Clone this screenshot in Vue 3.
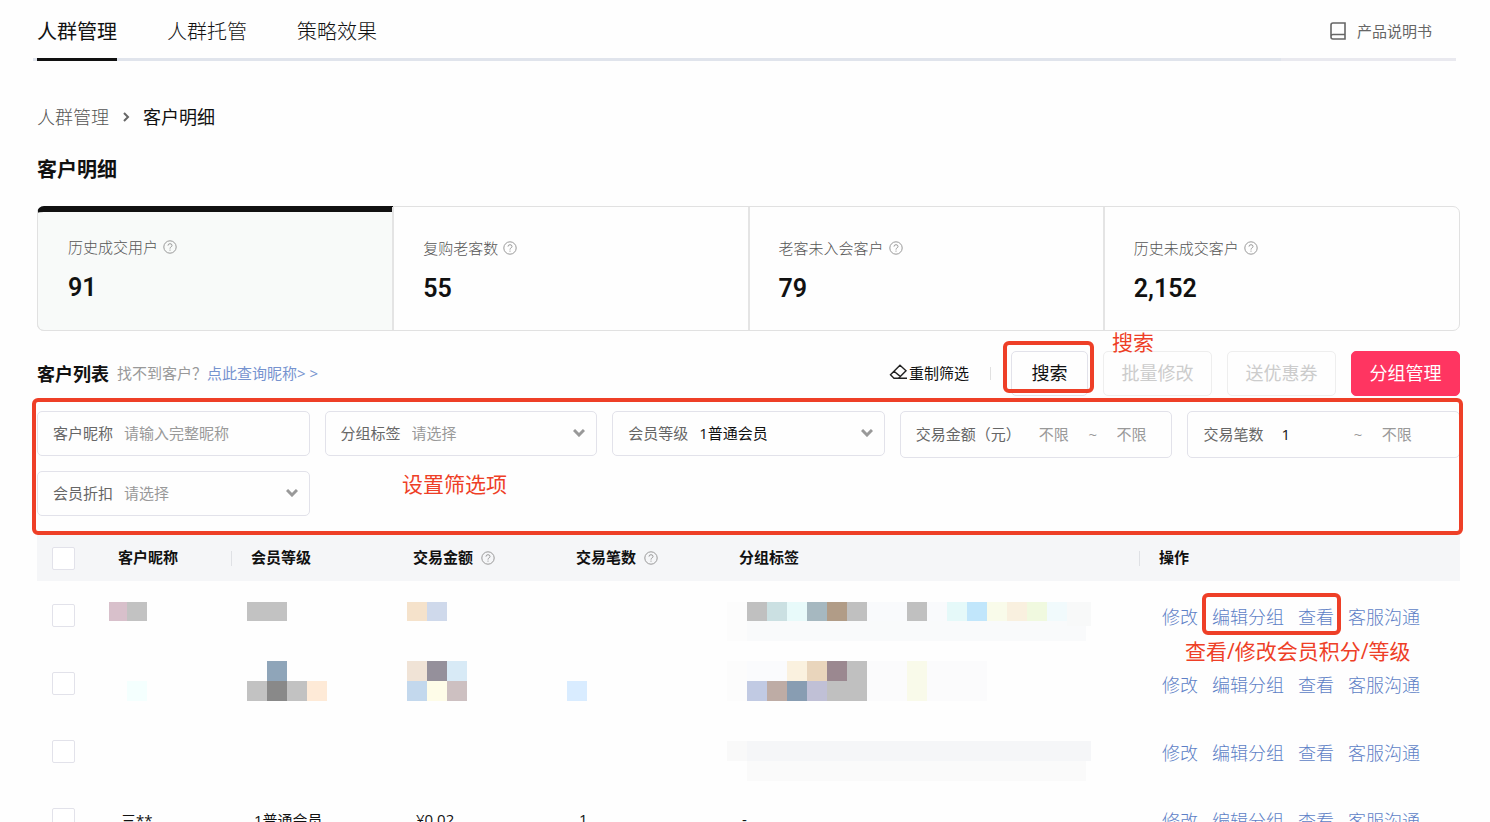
<script setup>
import { ref } from "vue";

const tabs = ["人群管理", "人群托管", "策略效果"];
const activeTab = ref("人群管理");

const stats = [
  { label: "历史成交用户", value: "91" },
  { label: "复购老客数", value: "55" },
  { label: "老客未入会客户", value: "79" },
  { label: "历史未成交客户", value: "2,152" },
];
const activeStat = ref(0);

const filters = ref({
  nickname: "",
  group: "",
  level: "1普通会员",
  amountMin: "",
  amountMax: "",
  countMin: "1",
  countMax: "",
  discount: "",
});

const columns = [
  { key: "name", title: "客户昵称" },
  { key: "level", title: "会员等级", divider: true },
  { key: "amount", title: "交易金额", help: true },
  { key: "count", title: "交易笔数", help: true },
  { key: "tag", title: "分组标签" },
];

const rows = [
  {},
  {},
  {},
  { name: "三**", level: "1普通会员", amount: "¥0.02", count: "1", tag: "-" },
];

const actions = ["修改", "编辑分组", "查看", "客服沟通"];

// Mosaico que oculta los datos: x, y, ancho, alto, color
const mosaic = [
  [0, 0, 18, 19, "#d8c0cb"],
  [18, 0, 20, 19, "#c2c2c2"],
  [138, 0, 40, 19, "#c2c2c2"],
  [298, 0, 20, 19, "#f5e2cb"],
  [318, 0, 20, 19, "#cfd9eb"],
  [618, 0, 20, 39, "#fcfcfc"],
  [638, 19, 339, 20, "#f9fafb"],
  [638, 0, 20, 19, "#c0c0c0"],
  [658, 0, 20, 19, "#cbe0e2"],
  [678, 0, 20, 19, "#e8fafa"],
  [698, 0, 20, 19, "#a6b8c0"],
  [718, 0, 20, 19, "#b19c87"],
  [738, 0, 20, 19, "#c0c0c0"],
  [758, 0, 40, 19, "#f9fafc"],
  [798, 0, 20, 19, "#c0c0c0"],
  [818, 0, 20, 19, "#f9fafc"],
  [838, 0, 20, 19, "#e5f9f9"],
  [858, 0, 20, 19, "#c1e6fb"],
  [878, 0, 20, 19, "#f9fbea"],
  [898, 0, 20, 19, "#f9f0df"],
  [918, 0, 20, 19, "#f0f9df"],
  [938, 0, 20, 19, "#f1fafc"],
  [958, 0, 24, 24, "#f8f9f9"],
  [158, 59, 20, 20, "#8fa5b9"],
  [18, 79, 20, 20, "#f4fffe"],
  [138, 79, 20, 20, "#c2c2c2"],
  [158, 79, 20, 20, "#898989"],
  [178, 79, 20, 20, "#c2c2c2"],
  [198, 79, 20, 20, "#feead7"],
  [298, 59, 20, 20, "#f0e3d6"],
  [318, 59, 20, 20, "#95909b"],
  [338, 59, 20, 20, "#d8eaf6"],
  [298, 79, 20, 20, "#c3d8ed"],
  [318, 79, 20, 20, "#fefce8"],
  [338, 79, 20, 20, "#cdc0c1"],
  [458, 79, 20, 20, "#d9ecff"],
  [618, 59, 20, 40, "#fcfcfc"],
  [638, 59, 40, 20, "#fafbfd"],
  [678, 59, 20, 20, "#faf1df"],
  [698, 59, 20, 20, "#e9d5bc"],
  [718, 59, 20, 20, "#9b8890"],
  [738, 59, 20, 20, "#c0c0c0"],
  [638, 79, 20, 20, "#c1cae3"],
  [658, 79, 20, 20, "#beaca5"],
  [678, 79, 20, 20, "#889db2"],
  [698, 79, 20, 20, "#c0c0d6"],
  [718, 79, 40, 20, "#c0c0c0"],
  [758, 59, 120, 40, "#fbfbfc"],
  [798, 59, 20, 40, "#f9faea"],
  [618, 139, 20, 20, "#f9f9f9"],
  [638, 139, 344, 20, "#f5f6f8"],
  [638, 159, 339, 20, "#fafafa"],
];
</script>

<template>
  <div class="page">
    <nav class="tabs">
      <a
        v-for="tab in tabs"
        :key="tab"
        href="#"
        class="tab"
        :class="{ active: tab === activeTab }"
        @click.prevent="activeTab = tab"
        >{{ tab }}</a
      >
      <a href="#" class="manual">
        <svg width="16" height="18" viewBox="0 0 16 18" fill="none" stroke="#666" stroke-width="1.6">
          <path d="M3 1H15V17H3Q1 17 1 15V3Q1 1 3 1Z M1 14.5Q1 12.5 3 12.5H15" />
        </svg>
        产品说明书
      </a>
    </nav>

    <div class="breadcrumb">
      <a href="#">人群管理</a>
      <svg width="8" height="10" viewBox="0 0 8 10" fill="none" stroke="#666" stroke-width="2">
        <path d="M2 1L6 5L2 9" />
      </svg>
      <span>客户明细</span>
    </div>

    <h1>客户明细</h1>

    <section class="stats">
      <div
        v-for="(stat, i) in stats"
        :key="stat.label"
        class="stat"
        :class="{ active: i === activeStat }"
        @click="activeStat = i"
      >
        <div class="stat-label">
          {{ stat.label }}
          <svg class="help" viewBox="0 0 14 14">
            <circle cx="7" cy="7" r="6.2" />
            <path d="M5 5.6Q5 3.7 7 3.7T9 5.5Q9 6.4 7.9 7Q7 7.5 7 8.6M7 9.6V10.7" />
          </svg>
        </div>
        <div class="stat-value">{{ stat.value }}</div>
      </div>
    </section>

    <div class="toolbar">
      <h2>客户列表</h2>
      <p class="hint">找不到客户？<a href="#">点此查询昵称&gt; &gt;</a></p>
      <button type="button" class="reset">
        <svg width="19" height="16" viewBox="0 0 19 16" fill="none" stroke="#222" stroke-width="1.4">
          <path d="M11 1.2L17 6.8L9.5 14.2H5L1.5 10.8Z M5 7.2L11.5 12.6M8 14.3H18" />
        </svg>
        重制筛选
      </button>
      <span class="separator"></span>
      <div class="search">
        <button type="button" class="btn btn-search">搜索</button>
        <div class="mark mark-search"></div>
        <span class="note note-search">搜索</span>
      </div>
      <button type="button" class="btn" disabled>批量修改</button>
      <button type="button" class="btn" disabled>送优惠券</button>
      <button type="button" class="btn btn-primary">分组管理</button>
    </div>

    <form class="filters" @submit.prevent>
      <label class="field">
        客户昵称
        <input v-model="filters.nickname" type="text" placeholder="请输入完整昵称" />
      </label>
      <label class="field">
        分组标签
        <select v-model="filters.group" :class="{ empty: !filters.group }">
          <option value="">请选择</option>
        </select>
        <svg class="arrow" viewBox="0 0 12 8"><path d="M1 1L6 6L11 1" /></svg>
      </label>
      <label class="field">
        会员等级
        <select v-model="filters.level">
          <option>1普通会员</option>
        </select>
        <svg class="arrow" viewBox="0 0 12 8"><path d="M1 1L6 6L11 1" /></svg>
      </label>
      <div class="field range">
        <label for="amount-min">交易金额（元）</label>
        <input id="amount-min" v-model="filters.amountMin" type="text" placeholder="不限" />
        <span class="tilde">~</span>
        <input v-model="filters.amountMax" type="text" placeholder="不限" aria-label="最高交易金额" />
      </div>
      <div class="field range">
        <label for="count-min">交易笔数</label>
        <input id="count-min" v-model="filters.countMin" type="text" placeholder="不限" />
        <span class="tilde">~</span>
        <input v-model="filters.countMax" type="text" placeholder="不限" aria-label="最多交易笔数" />
      </div>
      <label class="field">
        会员折扣
        <select v-model="filters.discount" :class="{ empty: !filters.discount }">
          <option value="">请选择</option>
        </select>
        <svg class="arrow" viewBox="0 0 12 8"><path d="M1 1L6 6L11 1" /></svg>
      </label>
      <div class="mark mark-filters"></div>
      <span class="note note-filters">设置筛选项</span>
    </form>

    <div class="table-wrap">
      <table>
        <thead>
          <tr>
            <th class="col-check"><input type="checkbox" aria-label="全选" /></th>
            <th v-for="col in columns" :key="col.key" :class="['col-' + col.key, { divider: col.divider }]">
              {{ col.title }}
              <svg v-if="col.help" class="help" viewBox="0 0 14 14">
                <circle cx="7" cy="7" r="6.2" />
                <path d="M5 5.6Q5 3.7 7 3.7T9 5.5Q9 6.4 7.9 7Q7 7.5 7 8.6M7 9.6V10.7" />
              </svg>
            </th>
            <th class="col-actions divider">操作</th>
          </tr>
        </thead>
        <tbody>
          <tr v-for="(row, i) in rows" :key="i">
            <td class="col-check"><input type="checkbox" :aria-label="'选择第' + (i + 1) + '行'" /></td>
            <td v-for="col in columns" :key="col.key">{{ row[col.key] }}</td>
            <td>
              <div class="actions">
                <a v-for="action in actions" :key="action" href="#">{{ action }}</a>
                <template v-if="i === 0">
                  <div class="mark mark-actions"></div>
                  <span class="note note-actions">查看/修改会员积分/等级</span>
                </template>
              </div>
            </td>
          </tr>
        </tbody>
      </table>
      <svg class="mosaic" width="982" height="198" shape-rendering="crispEdges">
        <rect v-for="(m, i) in mosaic" :key="i" :x="m[0]" :y="m[1]" :width="m[2]" :height="m[3]" :fill="m[4]" />
      </svg>
    </div>
  </div>
</template>

<style>
body {
  margin: 0;
  background: #fefefe;
}
</style>

<style scoped>
* {
  box-sizing: border-box;
}

.page {
  padding: 0 30px 0 37px;
  font-family: "Open Sans", "Noto Sans CJK SC", sans-serif;
  font-size: 15px;
  color: #111;
}

a {
  color: inherit;
  text-decoration: none;
}

button,
input,
select {
  font: inherit;
  color: inherit;
}

h1,
h2,
p {
  margin: 0;
}

/* Pestañas */
.tabs {
  display: flex;
  gap: 50px;
  height: 61px;
  margin: 0 4px 0 -4px;
  padding-left: 4px;
  background: linear-gradient(to left, #e9e9ef 175px, #e0e4ec 175px) bottom / 100% 3px no-repeat;
}

.tab {
  height: 61px;
  line-height: 64px;
  font-size: 20px;
  font-weight: 300;
}

.tab.active {
  border-bottom: 3px solid #111;
  font-weight: 400;
}

.manual {
  display: flex;
  align-items: center;
  gap: 11px;
  height: 61px;
  margin-left: auto;
  padding-right: 24px;
  color: #666;
}

.breadcrumb {
  display: flex;
  align-items: center;
  gap: 13px;
  margin-top: 44px;
  font-size: 18px;
  line-height: 24px;
}

.breadcrumb a {
  font-weight: 300;
  color: #555;
}

h1 {
  margin-top: 27px;
  font-size: 20px;
  line-height: 28px;
}

/* Tarjetas de datos */
.stats {
  display: grid;
  grid-template-columns: repeat(4, 1fr);
  height: 125px;
  margin-top: 22px;
  border: 1px solid #e1e1e1;
  border-radius: 7px;
}

.stat {
  margin-left: -1px;
  padding: 30px 29px 0;
  border-left: 2px solid #e4e4e4;
}

.stat.active {
  margin: -1px 0 -1px -1px;
  padding: 24px 30px 0;
  border: 1px solid #e1e1e1;
  border-top: 6px solid #111;
  border-right: 0;
  border-radius: 7px 0 0 7px;
  background: #f8faf9;
}

.stat-label {
  display: flex;
  align-items: center;
  gap: 5px;
  line-height: 22px;
  font-weight: 300;
  color: #555;
}

.stat-value {
  margin-top: 14px;
  font-family: Roboto, sans-serif;
  font-size: 25px;
  font-weight: 600;
  line-height: 32px;
}

.help {
  width: 14px;
  height: 14px;
  fill: none;
  stroke: #999;
}

/* Barra de herramientas */
.toolbar {
  display: flex;
  align-items: center;
  height: 45px;
  margin-top: 20px;
}

h2 {
  font-size: 18px;
  line-height: 24px;
}

.hint {
  margin-left: 8px;
  padding-bottom: 2px;
  color: #999;
}

.hint a {
  color: #7693cf;
}

.reset {
  display: flex;
  align-items: center;
  gap: 1px;
  margin-left: auto;
  padding: 0 0 3px;
  border: 0;
  background: none;
}

.separator {
  width: 1px;
  height: 13px;
  margin: 0 20px 0 21px;
  background: #e1e1e1;
}

.search {
  position: relative;
}

.btn {
  width: 109px;
  height: 45px;
  margin-left: 15px;
  padding: 0 0 4px;
  border: 1px solid #ddd;
  border-radius: 5px;
  background: transparent;
  font-size: 18px;
}

.btn:disabled {
  border-color: #eee;
  color: #ccc;
}

.btn-search {
  width: 77px;
  margin: 0;
  border-color: #e2e2ea;
}

.btn-primary {
  border-color: #ff3561;
  background: #ff3561;
  color: #fff;
}

/* Filtros */
.filters {
  position: relative;
  display: grid;
  grid-template-columns: repeat(5, 1fr);
  gap: 13px 15px;
  align-items: start;
  margin-top: 15px;
}

.field {
  position: relative;
  display: flex;
  align-items: center;
  gap: 11px;
  height: 45px;
  padding: 0 0 2px 15px;
  border: 1px solid #e2e2ea;
  border-radius: 5px;
  white-space: nowrap;
  color: #666;
}

.field input,
.field select {
  flex: 1;
  width: 0;
  min-width: 0;
  height: 40px;
  padding: 0;
  border: 0;
  outline: 0;
  background: transparent;
  appearance: none;
  color: #111;
}

.field input::placeholder,
.field select.empty {
  color: #999;
  opacity: 1;
}

.arrow {
  position: absolute;
  right: 11px;
  width: 12px;
  height: 8px;
  fill: none;
  stroke: #999;
  stroke-width: 3;
  pointer-events: none;
}

.range {
  gap: 0;
  height: 47px;
  padding-right: 7px;
}

.range label {
  margin-right: 18px;
}

.tilde {
  width: 30px;
  padding-left: 2px;
  color: #999;
}

/* Tabla */
.table-wrap {
  position: relative;
  margin-top: 19px;
}

table {
  width: 100%;
  table-layout: fixed;
  border-collapse: collapse;
}

th {
  height: 46px;
  padding: 0 0 3px 20px;
  background: #f5f6f8;
  text-align: left;
  font-weight: 700;
}

th .help {
  margin-left: 4px;
  vertical-align: -2px;
}

th.divider {
  background: linear-gradient(#dfe1e5, #dfe1e5) left center / 1px 15px no-repeat #f5f6f8;
}

td {
  height: 68px;
  padding: 0 0 0 23px;
}

.col-check {
  width: 61px;
  padding: 0 0 0 15px;
}

.col-check input {
  display: block;
  width: 23px;
  height: 23px;
  margin: 0;
  border: 1px solid #e2e2ea;
  border-radius: 2px;
  background: #fff;
  appearance: none;
}

.col-name {
  width: 133px;
}

.col-level {
  width: 162px;
}

.col-amount,
.col-count {
  width: 163px;
}

.col-actions {
  width: 321px;
}

.actions {
  position: relative;
  display: flex;
  gap: 14px;
  padding-top: 3px;
  font-size: 18px;
  font-weight: 300;
  line-height: 24px;
  color: #5d7fc6;
}

.mosaic {
  position: absolute;
  top: 67px;
  left: 72px;
}

/* Anotaciones en rojo */
.mark {
  position: absolute;
  border: 4px solid #ee3f27;
  border-radius: 6px;
  pointer-events: none;
}

.note {
  position: absolute;
  font-size: 21px;
  font-weight: 400;
  line-height: 28px;
  white-space: nowrap;
  color: #ee3f27;
}

.mark-search {
  inset: -10px -6px 3px -8px;
}

.note-search {
  top: -23px;
  left: 101px;
}

.mark-filters {
  inset: -13px -3px -19px -5px;
  z-index: 1;
}

.note-filters {
  top: 59px;
  left: 365px;
}

.mark-actions {
  top: -9px;
  left: 40px;
  width: 139px;
  height: 42px;
}

.note-actions {
  top: 35px;
  left: 23px;
}
</style>
